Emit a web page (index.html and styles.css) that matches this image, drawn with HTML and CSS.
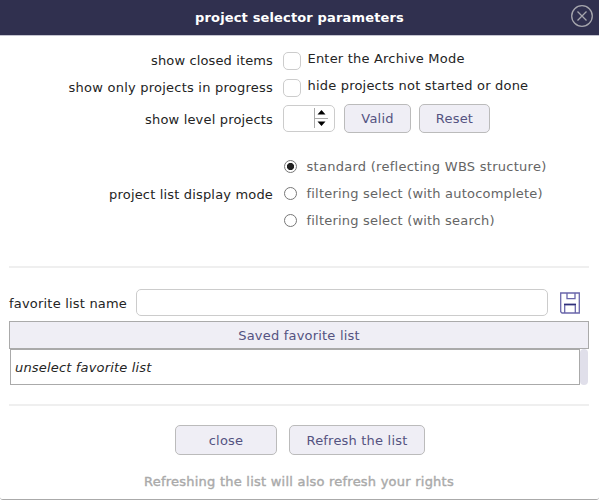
FILE: index.html
```html
<!DOCTYPE html>
<html lang="en">
<head>
<meta charset="utf-8">
<title>project selector parameters</title>
<link rel="stylesheet" href="styles.css">
</head>
<body>
<div class="dialog">
  <header class="titlebar">
    <h1 class="title">project selector parameters</h1>
    <svg class="close-icon" viewBox="0 0 24 24"><circle cx="12" cy="12" r="10.3"/><path d="M7.5 7.5l9 9M16.5 7.5l-9 9"/></svg>
  </header>
  <main class="content">
    <div class="row check-row">
      <span class="label l-closed">show closed items</span><span class="checkbox"></span><span class="hint">Enter the Archive Mode</span>
    </div>
    <div class="row check-row">
      <span class="label l-progress">show only projects in progress</span><span class="checkbox"></span><span class="hint">hide projects not started or done</span>
    </div>
    <div class="row level-row">
      <span class="label l-level">show level projects</span>
      <span class="spinner"><svg class="arrows" viewBox="0 0 16 20"><path class="rule" d="M1.5 0v20M1 10.5h14"/><path d="M8.5 2L12.5 6.5h-8zM8.5 18L12.5 13.5h-8z"/></svg></span>
      <button class="button valid">Valid</button>
      <button class="button reset">Reset</button>
    </div>
    <div class="row mode-row">
      <span class="label l-mode">project list display mode</span>
      <div class="options">
        <div class="option"><span class="radio selected"></span><span class="o-standard">standard (reflecting WBS structure)</span></div>
        <div class="option"><span class="radio"></span><span>filtering select (with autocomplete)</span></div>
        <div class="option"><span class="radio"></span><span>filtering select (with search)</span></div>
      </div>
    </div>
    <div class="divider"></div>
    <div class="favorite-row">
      <span class="favorite-label">favorite list name</span>
      <span class="name-input"></span>
      <svg class="save-icon" viewBox="0 0 20 22"><path d="M.7 1h18.6v20H2L.7 19.7zM7 1v5.7h8V1M4.7 21v-8.5h10.6V21"/><path class="dark" d="M4.7 13v-.5h10.6v.5"/></svg>
    </div>
    <div class="list-head">Saved favorite list</div>
    <div class="list-body">
      <div class="list-item">unselect favorite list</div>
      <div class="scrollbar"></div>
    </div>
    <div class="divider lower"></div>
    <div class="actions">
      <button class="button close">close</button>
      <button class="button refresh">Refresh the list</button>
    </div>
    <p class="note">Refreshing the list will also refresh your rights</p>
  </main>
</div>
</body>
</html>
```
FILE: styles.css
```css
* { box-sizing: border-box; }
body { margin: 0; background: #fff; font: 13px/18px Verdana, "DejaVu Sans", sans-serif; letter-spacing: .2px; color: #242424; }
.dialog { height: 500px; border-bottom: 1px solid #aaa; border-radius: 0 0 3px 3px; overflow: hidden; }
.titlebar { position: relative; height: 36px; background: #30304f; border-bottom: 1px solid #c4c4d0; display: flex; justify-content: center; }
.title { margin: 9px 0 0; font-size: 13px; line-height: 18px; letter-spacing: .15px; color: #fff; white-space: nowrap; }
.close-icon { position: absolute; right: 5px; top: 4px; width: 24px; height: 24px; fill: none; stroke: #a6a6ad; stroke-width: 1.3; }
.content { padding: 16px 10px 0 9px; }
.row { display: flex; white-space: nowrap; }
.label { width: 264px; margin-right: 10px; text-align: right; flex: none; }
.l-closed { letter-spacing: .13px; }
.l-progress { letter-spacing: .23px; }
.l-level, .l-mode { letter-spacing: .17px; }
.check-row { height: 27px; }
.checkbox { width: 18px; height: 18px; border: 1px solid #ccc; border-radius: 5px; }
.hint { margin: -2px 0 0 6.5px; }
.level-row { height: 29px; margin-top: -2px; align-items: center; }
.l-level { padding-top: 2px; }
.l-mode { padding-top: 2px; }
.spinner { width: 52px; height: 27px; border: 1px solid #ccc; border-radius: 5px; padding: 2px 0 0 29px; }
.arrows { display: block; width: 16px; height: 20px; fill: #000; }
.arrows .rule { fill: none; stroke: #aaa; }
.button { font: inherit; letter-spacing: .2px; color: #545381; background: #efeef5; border: 1px solid #bbb; border-radius: 5px; padding: 1px 0 0; white-space: nowrap; }
.valid { width: 67px; height: 29px; margin-left: 9px; }
.reset { width: 71px; height: 29px; margin-left: 8px; }
.mode-row { margin-top: 20px; align-items: center; }
.options { color: #656565; }
.option { height: 27px; display: flex; align-items: center; }
.o-standard { letter-spacing: .27px; }
.radio { width: 13px; height: 13px; border: 1px solid #777; border-radius: 50%; margin: 0 9.5px 0 1px; }
.selected { background: radial-gradient(circle, #222 0 3.2px, #fff 4px); }
.divider { height: 2px; background: #efefef; margin-top: 32px; }
.favorite-row { display: flex; height: 27px; margin-top: 21px; align-items: center; white-space: nowrap; }
.favorite-label { width: 127px; padding-top: 2px; }
.name-input { width: 412px; height: 27px; border: 1px solid #ccc; border-radius: 5px; }
.save-icon { width: 20px; height: 22px; margin: 0 0 0 12px; fill: none; stroke: #6966aa; stroke-width: 1.3; }
.save-icon .dark { stroke: #30307a; }
.list-head { height: 28px; margin-top: 5px; border: 1px solid #aaa; background: #efeef5; color: #545381; text-align: center; line-height: 27px; }
.list-body { display: flex; height: 36px; margin-left: 1px; }
.list-item { width: 570px; border: 1px solid #aaa; padding: 9px 4px; font-style: italic; letter-spacing: .17px; }
.scrollbar { width: 8px; background: #e0dfea; border-radius: 4px; }
.divider.lower { margin-top: 19px; }
.actions { display: flex; justify-content: center; gap: 12px; margin: 19px 0 0 2px; }
.close { width: 102px; height: 30px; }
.refresh { width: 136px; height: 30px; }
.note { margin: 18px 0 0; color: #aaa; text-align: center; letter-spacing: .23px; -webkit-text-stroke: .4px #aaa; }
```
